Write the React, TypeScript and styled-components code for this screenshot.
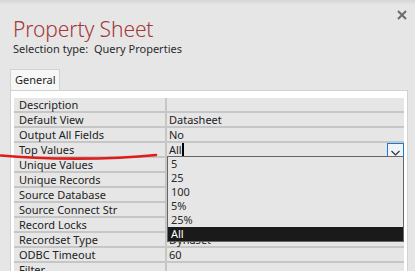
import React from "react";
import styled, { createGlobalStyle } from "styled-components";

const Global = createGlobalStyle`
  html, body { margin: 0; padding: 0; background: #e6e6e6; overflow: hidden; }
  body { font-family: "Noto Sans", "Open Sans", sans-serif; }
`;

const Page = styled.div`
  position: relative;
  width: 415px;
  height: 271px;
  overflow: hidden;
  background: linear-gradient(#d6d6d6 0px, #e6e6e6 5px, #e6e6e6 100%);
  display: flex;
  flex-direction: column;
`;

const Header = styled.div`
  display: flex;
  justify-content: space-between;
  align-items: flex-start;
  padding: 10px 8px 0 13px;
`;

const Title = styled.div`
  font-family: "Noto Sans", sans-serif;
  font-weight: 300;
  font-size: 21px;
  line-height: 22px;
  color: #a4373a;
  margin-top: 8px;
  letter-spacing: -0.1px;
`;

const CloseBtn = styled.div`
  width: 10px;
  height: 10px;
  display: flex;
`;

const Subtitle = styled.div`
  padding-left: 13px;
  font-size: 11px;
  line-height: 14px;
  color: #2b2b2b;
  margin-top: 2px;
`;

const TabRow = styled.div`
  display: flex;
  padding-left: 10px;
  margin-top: 13px;
`;

const Tab = styled.div`
  height: 20px;
  padding: 0 4px 0 4px;
  width: 40px;
  background: #f7f7f7;
  border: 1px solid #d2d2d2;
  border-bottom: none;
  font-size: 11px;
  line-height: 20px;
  color: #1f1f1f;
`;

const Panel = styled.div`
  margin: 0 7px 0 10px;
  background: #ffffff;
  border: 1px solid #d2d2d2;
  padding: 7px 3px 0 3px;
  flex: 1;
`;

const Grid = styled.div`
  display: grid;
  grid-template-columns: 151px 1fr;
  grid-auto-rows: 13px;
  gap: 2px;
  background: #c6c6c6;
`;

const Cell = styled.div<{ $value?: boolean }>`
  position: relative;
  background: #e6e6e6;
  font-size: 11px;
  line-height: 13px;
  color: #222222;
  padding-left: ${(p) => (p.$value ? "2px" : "5px")};
  white-space: nowrap;
  display: flex;
  align-items: center;
`;

const Caret = styled.span`
  display: inline-block;
  width: 2px;
  height: 13px;
  background: #000;
`;

const DropBtn = styled.div`
  position: absolute;
  right: 0;
  top: 0;
  width: 15px;
  height: 12px;
  border: 1px solid #1a7ad4;
  background: #eef4fa;
  display: flex;
  align-items: flex-end;
  justify-content: center;
`;

const List = styled.div`
  position: absolute;
  left: 0;
  right: 0;
  top: 13px;
  background: #e6e6e6;
  border: 1px solid #666666;
  z-index: 2;
  display: flex;
  flex-direction: column;
`;

const Item = styled.div<{ $sel?: boolean }>`
  height: 14px;
  line-height: 14px;
  font-size: 11px;
  padding-left: 3px;
  color: ${(p) => (p.$sel ? "#ffffff" : "#2a2a2a")};
  background: ${(p) => (p.$sel ? "#1a1a1a" : "transparent")};
`;

const Annotation = styled.svg`
  position: absolute;
  left: 0;
  top: 0;
  pointer-events: none;
  z-index: 3;
`;

const rows: [string, string][] = [
  ["Description", ""],
  ["Default View", "Datasheet"],
  ["Output All Fields", "No"],
  ["Top Values", "All"],
  ["Unique Values", ""],
  ["Unique Records", ""],
  ["Source Database", ""],
  ["Source Connect Str", ""],
  ["Record Locks", ""],
  ["Recordset Type", "Dynaset"],
  ["ODBC Timeout", "60"],
  ["Filter", ""],
];

const options = ["5", "25", "100", "5%", "25%", "All"];

export default function App() {
  return (
    <>
      <Global />
      <Page>
        <Header>
          <Title>Property Sheet</Title>
          <CloseBtn>
            <svg width="10" height="10" viewBox="0 0 10 10">
              <path d="M1 1 L9 9 M9 1 L1 9" stroke="#6b6b6b" strokeWidth="2" />
            </svg>
          </CloseBtn>
        </Header>
        <Subtitle>Selection type:&nbsp;&nbsp;Query Properties</Subtitle>
        <TabRow>
          <Tab>General</Tab>
        </TabRow>
        <Panel>
          <Grid>
            {rows.map(([label, value]) => (
              <React.Fragment key={label}>
                <Cell>{label}</Cell>
                {label === "Top Values" ? (
                  <Cell $value>
                    {value}
                    <Caret />
                    <DropBtn>
                      <svg width="9" height="6" viewBox="0 0 9 6">
                        <path d="M0.5 1 L4.5 5 L8.5 1" stroke="#333" strokeWidth="1.2" fill="none" />
                      </svg>
                    </DropBtn>
                    <List>
                      {options.map((o) => (
                        <Item key={o} $sel={o === "All"}>
                          {o}
                        </Item>
                      ))}
                    </List>
                  </Cell>
                ) : (
                  <Cell $value>{value}</Cell>
                )}
              </React.Fragment>
            ))}
          </Grid>
        </Panel>
        <Annotation width="415" height="271" viewBox="0 0 415 271">
          <path
            d="M1 155.5 C 40 159.5, 110 160, 156 155"
            stroke="#e01b1b"
            strokeWidth="2.6"
            fill="none"
            strokeLinecap="round"
          />
        </Annotation>
      </Page>
    </>
  );
}
